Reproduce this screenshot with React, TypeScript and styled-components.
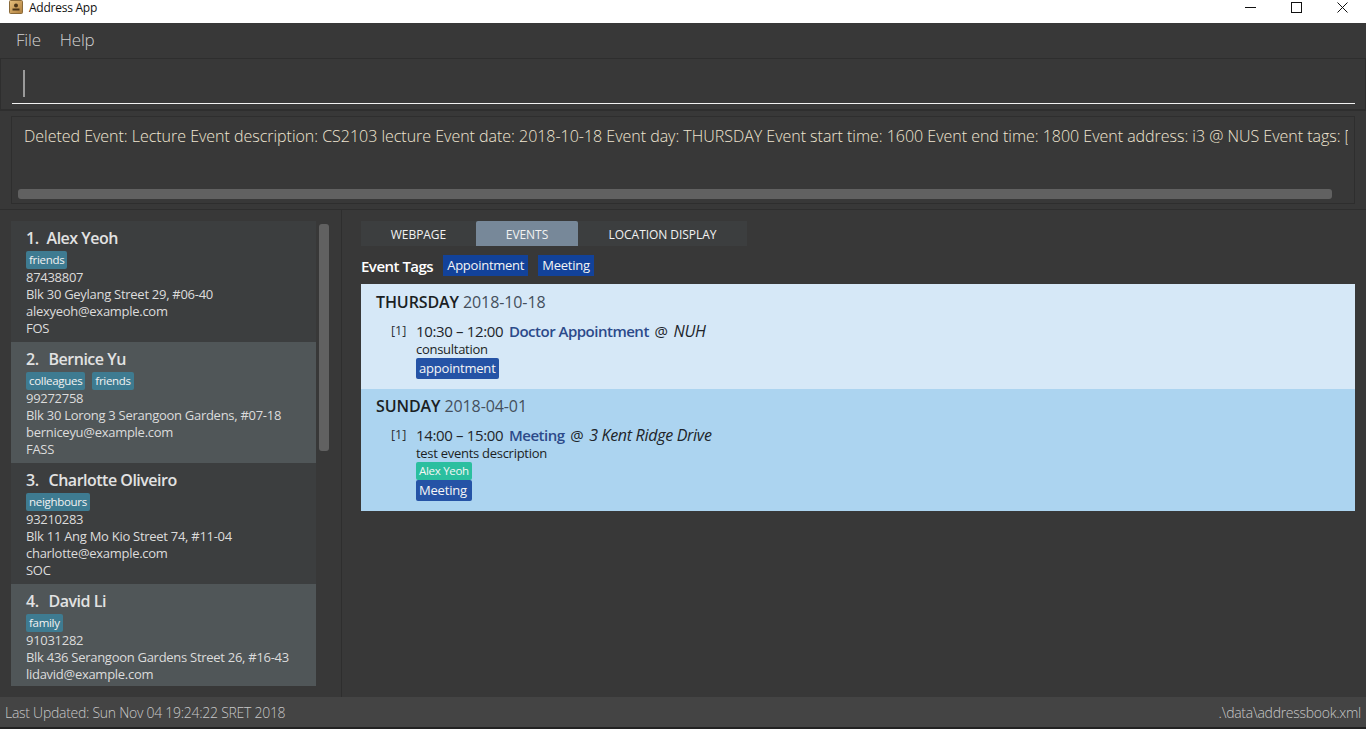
import React from "react";
import styled, { createGlobalStyle } from "styled-components";

const Global = createGlobalStyle`
  html, body { margin: 0; padding: 0; height: 100%; overflow: hidden; background: #383838; }
  body { font-family: "Open Sans", "Noto Sans", "Liberation Sans", sans-serif; }
`;

const Page = styled.div`
  width: 1366px;
  height: 729px;
  display: flex;
  flex-direction: column;
  background: #383838;
  overflow: hidden;
`;

const TitleBar = styled.div`
  height: 23px;
  flex: none;
  background: #fff;
  display: flex;
  align-items: center;
  padding-left: 9px;
  color: #111;
  font-size: 12px;
  letter-spacing: -0.25px;
`;
const AppIcon = styled.svg`
  width: 14px;
  height: 14px;
  margin-right: 6px;
  margin-top: -9px;
`;
const TitleText = styled.span`
  margin-top: -8px;
  flex: 1;
`;
const WinButtons = styled.div`
  display: flex;
  align-items: center;
  height: 14px;
  margin-top: -8px;
  padding-right: 18px;
  gap: 35px;
`;

const MenuBar = styled.div`
  height: 35px;
  flex: none;
  box-sizing: border-box;
  padding: 0 0 2px 16px;
  display: flex;
  align-items: center;
  gap: 19px;
  color: #d2d2d2;
  font-size: 17px;
  font-weight: 300;
  letter-spacing: -0.2px;
`;

const CommandPane = styled.div`
  height: 52px;
  flex: none;
  box-sizing: border-box;
  border: 1px solid #2e2e2e;
  padding: 0 10px 0 11px;
  display: flex;
`;
const CommandBox = styled.div`
  flex: 1;
  height: 45px;
  box-sizing: border-box;
  border-bottom: 1px solid #f2f2f2;
  padding: 11px 0 0 11px;
`;
const Caret = styled.div`
  width: 2px;
  height: 27px;
  background: #9a9a9a;
`;

const ResultPane = styled.div`
  height: 100px;
  flex: none;
  box-sizing: border-box;
  border-top: 1px solid #2e2e2e;
  border-bottom: 1px solid #2e2e2e;
  padding: 5px 11px 5px 11px;
  display: flex;
`;
const ResultBox = styled.div`
  flex: 1;
  box-sizing: border-box;
  border: 1px solid #2e2e2e;
  padding: 9px 6px 4px 12px;
  display: flex;
  flex-direction: column;
  justify-content: space-between;
  overflow: hidden;
`;
const ResultText = styled.div`
  color: #f0e6d2;
  font-size: 16px;
  font-weight: 300;
  line-height: 21px;
  white-space: nowrap;
  letter-spacing: -0.02px;
  overflow: hidden;
`;
const HScrollThumb = styled.div`
  height: 10px;
  width: 1314px;
  margin-left: -6px;
  border-radius: 3px;
  background: #616161;
`;

const Main = styled.div`
  flex: 1;
  display: flex;
  min-height: 0;
`;

const LeftPane = styled.div`
  width: 342px;
  flex: none;
  box-sizing: border-box;
  border-right: 1px solid #2e2e2e;
  padding: 11px 12px 0 11px;
  display: flex;
  gap: 3px;
  overflow: hidden;
`;
const PersonList = styled.div`
  width: 305px;
  flex: none;
  height: 465px;
  overflow: hidden;
`;
const Card = styled.div<{ $alt?: boolean }>`
  height: 121px;
  box-sizing: border-box;
  padding: 7px 0 0 15px;
  background: ${(p) => (p.$alt ? "#505658" : "#3c3e3f")};
  color: #dcdcdc;
  font-size: 13px;
  letter-spacing: -0.28px;
`;
const CardName = styled.div`
  display: flex;
  font-size: 16px;
  font-weight: 600;
  line-height: 21px;
  color: #e2e2e2;
  letter-spacing: -0.5px;
`;
const CardIndex = styled.span<{ $gap: number }>`
  margin-right: ${(p) => p.$gap}px;
`;
const TagRow = styled.div`
  display: flex;
  gap: 7px;
  margin-top: 2px;
`;
const Tag = styled.span`
  height: 18px;
  line-height: 17px;
  padding: 0 3px;
  border-radius: 2px;
  background: #3e7b91;
  color: #f2f2f2;
  font-size: 11.5px;
  letter-spacing: -0.3px;
`;
const CardLine = styled.div`
  height: 17px;
  line-height: 17px;
  white-space: nowrap;
`;
const VScrollThumb = styled.div`
  width: 10px;
  height: 227px;
  margin-top: 3px;
  border-radius: 3px;
  background: #616161;
`;

const RightPane = styled.div`
  flex: 1;
  min-width: 0;
  padding: 11px 11px 0 19px;
`;
const Tabs = styled.div`
  display: flex;
  width: 386px;
  height: 25px;
  background: #3c3e3f;
`;
const TabItem = styled.div<{ $active?: boolean; $w: number }>`
  width: ${(p) => p.$w}px;
  box-sizing: border-box;
  padding-top: 2px;
  display: flex;
  align-items: center;
  justify-content: center;
  color: #f2f2f2;
  font-size: 12px;
  letter-spacing: -0.05px;
  border-radius: 2px 2px 0 0;
  background: ${(p) => (p.$active ? "#778899" : "transparent")};
`;
const TagsBar = styled.div`
  display: flex;
  align-items: center;
  height: 21px;
  margin: 9px 0 8px;
  color: #fff;
  font-size: 15px;
  font-weight: 600;
  letter-spacing: -0.5px;
`;
const HeaderTag = styled.span`
  height: 21px;
  line-height: 21px;
  margin-left: 10px;
  padding: 0 4px;
  background: #12429a;
  color: #f4f4f4;
  font-size: 13px;
  font-weight: 400;
  letter-spacing: -0.25px;
  & + & { margin-left: 10px; }
`;

const DayBlock = styled.section<{ $tone: string; $h: number; $pad: number }>`
  height: ${(p) => p.$h}px;
  box-sizing: border-box;
  padding: ${(p) => p.$pad}px 15px 0 15px;
  background: ${(p) => p.$tone};
`;
const DayHead = styled.div`
  font-size: 16px;
  line-height: 20px;
  color: #444f5c;
  letter-spacing: -0.1px;
`;
const DayName = styled.span`
  color: #1b1f24;
  font-weight: 600;
`;
const EventRow = styled.div`
  display: flex;
  margin-top: 9px;
  margin-left: 15px;
`;
const EventIndex = styled.div`
  width: 25px;
  flex: none;
  color: #2b2f36;
  font-size: 12.5px;
  line-height: 20px;
`;
const EventBody = styled.div`
  display: flex;
  flex-direction: column;
  align-items: flex-start;
`;
const EventLine = styled.div`
  font-size: 15px;
  line-height: 20px;
  color: #20242a;
  letter-spacing: -0.2px;
  word-spacing: 2px;
  white-space: nowrap;
`;
const EventTime = styled.span`
  letter-spacing: -0.35px;
  word-spacing: 0;
`;
const EventTitle = styled.span`
  color: #2c4a8a;
  font-weight: 600;
  letter-spacing: -0.5px;
  word-spacing: 0;
`;
const EventPlace = styled.em`
  font-style: italic;
  font-size: 16px;
  letter-spacing: -0.3px;
  word-spacing: 0;
`;
const EventDesc = styled.div`
  font-size: 13px;
  line-height: 17px;
  color: #1b1f24;
  letter-spacing: -0.28px;
`;
const ChipStack = styled.div`
  display: inline-flex;
  flex-direction: column;
`;
const PersonChip = styled.span`
  height: 18px;
  line-height: 17px;
  padding: 0 3px;
  border-radius: 2px;
  background: #2bbf9f;
  color: #f6f6f6;
  font-size: 11.5px;
  letter-spacing: -0.3px;
`;
const EventChip = styled.span`
  height: 21px;
  line-height: 20px;
  padding: 0 3px;
  border-radius: 2px;
  background: #2553a6;
  color: #f6f6f6;
  font-size: 13px;
  letter-spacing: -0.2px;
`;

const StatusBar = styled.div`
  height: 30px;
  flex: none;
  box-sizing: border-box;
  padding: 0 5px;
  display: flex;
  align-items: center;
  justify-content: space-between;
  background: #444444;
  color: #c8c8c8;
  font-size: 14px;
  font-weight: 300;
  letter-spacing: -0.27px;
`;
const BottomEdge = styled.div`
  height: 2px;
  flex: none;
  background: #222;
`;

const people = [
  { name: "Alex Yeoh", tags: ["friends"], phone: "87438807", address: "Blk 30 Geylang Street 29, #06-40", email: "alexyeoh@example.com", faculty: "FOS" },
  { name: "Bernice Yu", tags: ["colleagues", "friends"], phone: "99272758", address: "Blk 30 Lorong 3 Serangoon Gardens, #07-18", email: "berniceyu@example.com", faculty: "FASS" },
  { name: "Charlotte Oliveiro", tags: ["neighbours"], phone: "93210283", address: "Blk 11 Ang Mo Kio Street 74, #11-04", email: "charlotte@example.com", faculty: "SOC" },
  { name: "David Li", tags: ["family"], phone: "91031282", address: "Blk 436 Serangoon Gardens Street 26, #16-43", email: "lidavid@example.com", faculty: "" },
];

const App: React.FC = () => (
  <Page>
    <Global />
    <TitleBar>
      <AppIcon viewBox="0 0 14 14">
        <defs>
          <linearGradient id="appIconFill" x1="0" y1="0" x2="1" y2="1">
            <stop offset="0" stopColor="#e6c07e" />
            <stop offset="1" stopColor="#b07f3c" />
          </linearGradient>
        </defs>
        <rect x="0.5" y="0.5" width="13" height="13" rx="1" fill="url(#appIconFill)" stroke="#8a6a3a" />
        <circle cx="7" cy="5.5" r="2" fill="#4a3418" />
        <rect x="3.5" y="8.5" width="7" height="2" fill="#4a3418" />
      </AppIcon>
      <TitleText>Address App</TitleText>
      <WinButtons>
        <svg width="11" height="11" viewBox="0 0 11 11"><path d="M0 5.5h11" stroke="#111" /></svg>
        <svg width="11" height="11" viewBox="0 0 11 11"><rect x="0.5" y="0.5" width="10" height="10" fill="none" stroke="#111" /></svg>
        <svg width="11" height="11" viewBox="0 0 11 11"><path d="M0.5 0.5l10 10M10.5 0.5l-10 10" stroke="#111" /></svg>
      </WinButtons>
    </TitleBar>
    <MenuBar>
      <span>File</span>
      <span>Help</span>
    </MenuBar>
    <CommandPane>
      <CommandBox>
        <Caret />
      </CommandBox>
    </CommandPane>
    <ResultPane>
      <ResultBox>
        <ResultText>
          Deleted Event: Lecture Event description: CS2103 lecture Event date: 2018-10-18 Event day: THURSDAY Event start time: 1600 Event end time: 1800 Event address: i3 @ NUS Event tags: [
        </ResultText>
        <HScrollThumb />
      </ResultBox>
    </ResultPane>
    <Main>
      <LeftPane>
        <PersonList>
          {people.map((p, i) => (
            <Card key={p.name} $alt={i % 2 === 1}>
              <CardName>
                <CardIndex $gap={i === 0 ? 8 : 10}>{i + 1}.</CardIndex>
                {p.name}
              </CardName>
              <TagRow>
                {p.tags.map((t) => (
                  <Tag key={t}>{t}</Tag>
                ))}
              </TagRow>
              <CardLine>{p.phone}</CardLine>
              <CardLine>{p.address}</CardLine>
              <CardLine>{p.email}</CardLine>
              <CardLine>{p.faculty}</CardLine>
            </Card>
          ))}
        </PersonList>
        <VScrollThumb />
      </LeftPane>
      <RightPane>
        <Tabs>
          <TabItem $w={115}>WEBPAGE</TabItem>
          <TabItem $w={102} $active>EVENTS</TabItem>
          <TabItem $w={169}>LOCATION DISPLAY</TabItem>
        </Tabs>
        <TagsBar>
          Event Tags
          <HeaderTag>Appointment</HeaderTag>
          <HeaderTag>Meeting</HeaderTag>
        </TagsBar>
        <DayBlock $tone="#d6e8f7" $h={105} $pad={8}>
          <DayHead>
            <DayName>THURSDAY</DayName> 2018-10-18
          </DayHead>
          <EventRow>
            <EventIndex>[1]</EventIndex>
            <EventBody>
              <EventLine>
                <EventTime>10:30 – 12:00</EventTime> <EventTitle>Doctor Appointment</EventTitle> @ <EventPlace>NUH</EventPlace>
              </EventLine>
              <EventDesc>consultation</EventDesc>
              <ChipStack>
                <EventChip>appointment</EventChip>
              </ChipStack>
            </EventBody>
          </EventRow>
        </DayBlock>
        <DayBlock $tone="#acd4f0" $h={122} $pad={7}>
          <DayHead>
            <DayName>SUNDAY</DayName> 2018-04-01
          </DayHead>
          <EventRow>
            <EventIndex>[1]</EventIndex>
            <EventBody>
              <EventLine>
                <EventTime>14:00 – 15:00</EventTime> <EventTitle>Meeting</EventTitle> @ <EventPlace>3 Kent Ridge Drive</EventPlace>
              </EventLine>
              <EventDesc>test events description</EventDesc>
              <ChipStack>
                <PersonChip>Alex Yeoh</PersonChip>
                <EventChip>Meeting</EventChip>
              </ChipStack>
            </EventBody>
          </EventRow>
        </DayBlock>
      </RightPane>
    </Main>
    <StatusBar>
      <span>Last Updated: Sun Nov 04 19:24:22 SRET 2018</span>
      <span>.\data\addressbook.xml</span>
    </StatusBar>
    <BottomEdge />
  </Page>
);

export default App;
